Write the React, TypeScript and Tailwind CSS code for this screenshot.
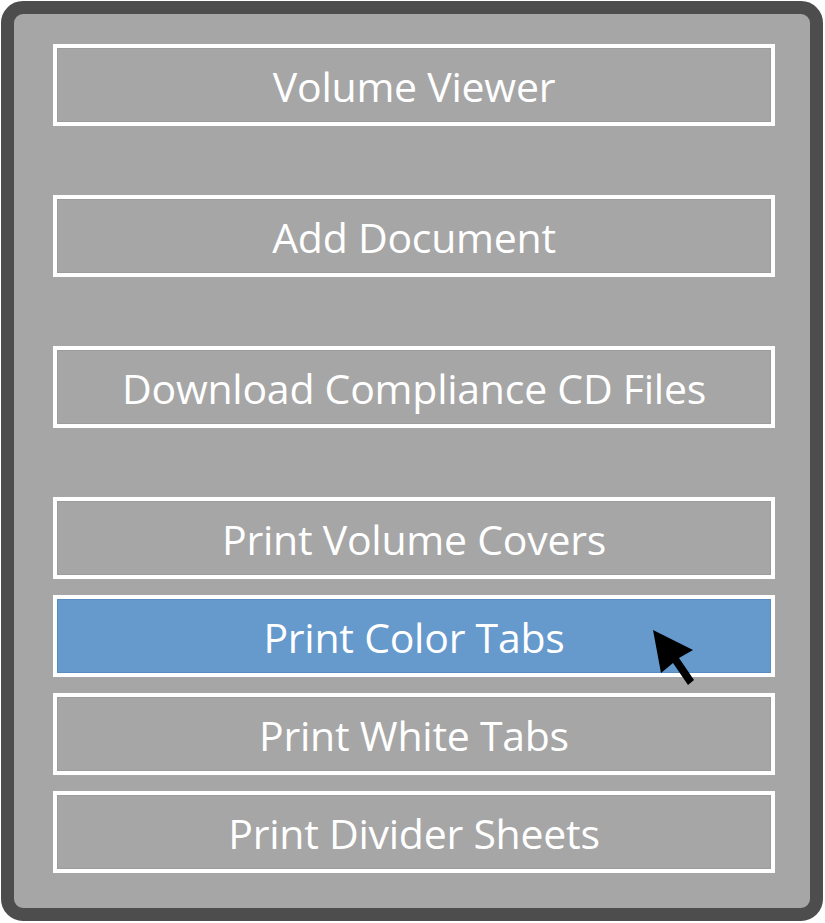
const items = [
  { label: 'Volume Viewer', gap: 'mt-0' },
  { label: 'Add Document', gap: 'mt-[69px]' },
  { label: 'Download Compliance CD Files', gap: 'mt-[69px]' },
  { label: 'Print Volume Covers', gap: 'mt-[69px]' },
  { label: 'Print Color Tabs', gap: 'mt-[16px]', active: true },
  { label: 'Print White Tabs', gap: 'mt-[16px]' },
  { label: 'Print Divider Sheets', gap: 'mt-[16px]' },
];

function Cursor() {
  // pointer arrow sitting over the highlighted row
  return (
    <svg className="absolute left-[594px] top-[29px]" width="48" height="60" viewBox="0 0 48 60">
      <path d="M2 2 L42 22 L28 30 L43 52 L37 57 L22 35 L10 45 Z" fill="#000" />
    </svg>
  );
}

export default function App() {
  return (
    <div className="w-[825px] h-[923px] bg-white pt-[1px] pl-[1px]" style={{ fontFamily: '"Open Sans", "Noto Sans", sans-serif' }}>
      <div className="w-[822px] h-[920px] rounded-[22px] border-[13px] border-[#4d4d4d] bg-[#a6a6a6] pt-[30px] pl-[39px] pr-[35px] flex flex-col">
        {items.map((item) => (
          <div
            key={item.label}
            className={`${item.gap} relative h-[82px] border-4 border-white flex items-center justify-center text-white text-[41px] tracking-[-0.25px] leading-none ${
              item.active ? 'bg-[#6699cc] shadow-[inset_0_0_0_1px_#5a8cc4]' : 'shadow-[inset_0_0_0_1px_#9c9c9c]'
            }`}
          >
            <span className="pt-[3px]">{item.label}</span>
            {item.active && <Cursor />}
          </div>
        ))}
      </div>
    </div>
  );
}
